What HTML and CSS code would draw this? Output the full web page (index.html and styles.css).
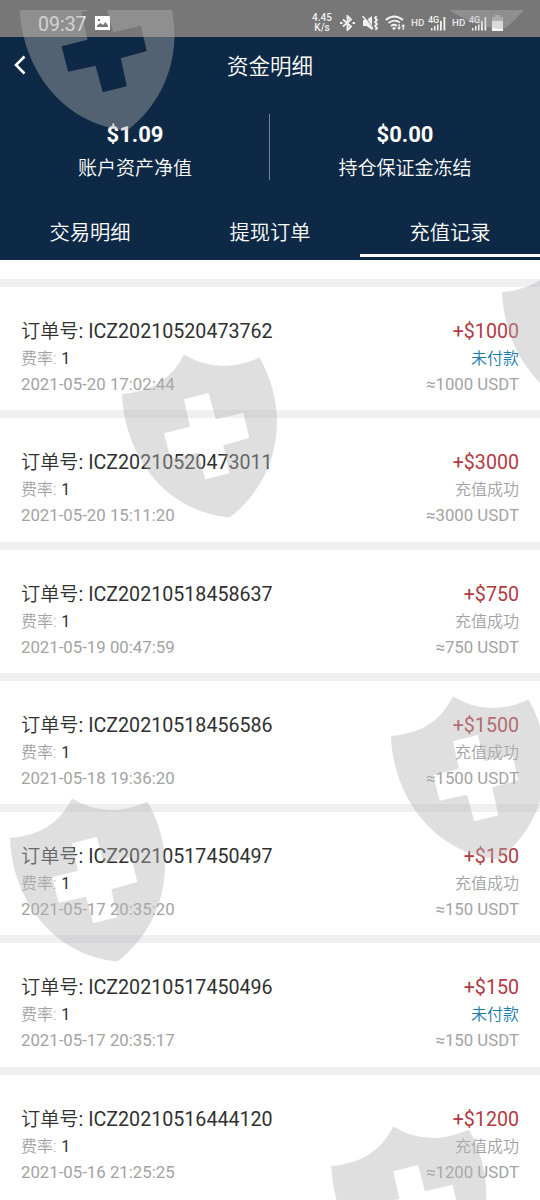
FILE: index.html
```html
<!doctype html>
<html lang="zh-CN">
<head>
  <meta charset="UTF-8">
  <meta name="viewport" content="width=device-width, initial-scale=1.0">
  <title>资金明细</title>
  <link rel="stylesheet" href="styles.css">
</head>
<body>
<div class="screen">
  <div class="status">
    <span class="status__time">09:37</span>
    <svg class="status__photo" width="16" height="14" viewBox="0 0 16 14">
      <path fill="#fff" fill-rule="evenodd" d="M0 0h15v14H0zM2 11h11V9.500L10.500 6 8 9 5.500 7 2 9.500zM3 3v2h2V3z"/>
    </svg>
    <div class="status__icons">
      <div class="speed">
        <span>4.45</span>
        <span>K/s</span>
      </div>
      <svg class="status__bt" width="15" height="16" viewBox="0 0 15 16">
        <path fill="none" stroke="#f2f2f2" stroke-width="1.800" d="M3 4.500l8 7L7.500 15V1L11 4.500l-8 7"/>
        <path fill="#f2f2f2" d="M0 7h2.500v2H0zM12.500 7H15v2h-2.500z"/>
      </svg>
      <svg class="status__mute" width="17" height="16" viewBox="0 0 17 16">
        <path fill="#f2f2f2" d="M1 5h3.500L10 1v14l-5.500-4H1z"/>
        <path stroke="#777" stroke-width="1" d="M2 0l9 13"/>
        <path stroke="#f2f2f2" stroke-width="1.500" d="M.5 1l10.500 13"/>
        <path fill="none" stroke="#f2f2f2" stroke-width="1.800" d="M14.500 1l-1.500 2 2 2-2 2 2 2-2 2 2 2-1.500 2"/>
      </svg>
      <svg class="status__wifi" width="21" height="16" viewBox="0 0 21 16">
        <path fill="none" stroke="#f2f2f2" stroke-width="1.700" d="M.8 5Q9 -2 18 5M3.500 8Q9 3.500 15 7.500M6 11q3-2.500 6 0"/>
        <circle cx="9" cy="13.300" r="1.500" fill="#f2f2f2"/>
        <path fill="#f2f2f2" d="M13.500 9h1.200v3.500H16L14 15l-2-2.500h1.500zM18.800 15h-1.200v-3.500h-1.300L18.300 9l2 2.500h-1.500z"/>
      </svg>
      <span class="hd">HD</span>
      <svg class="signal" width="19" height="16" viewBox="0 0 19 16">
        <text class="signal__label" x="0" y="7.500">4G</text>
        <path fill="#f2f2f2" d="M3 13h1.500v2.500H3zM6 11h1.500v4.500H6zM9 9.500h1.500v6H9zM12 6h1.800v9.500H12zM15.500 2h1.800v13.500h-1.800z"/>
      </svg>
      <span class="hd">HD</span>
      <svg class="signal" width="19" height="16" viewBox="0 0 19 16">
        <text class="signal__label" x="0" y="7.500">4G</text>
        <path fill="#f2f2f2" d="M3 13h1.500v2.500H3zM6 11h1.500v4.500H6zM9 9.500h1.500v6H9zM12 6h1.800v9.500H12zM15.500 2h1.800v13.500h-1.800z"/>
      </svg>
      <svg class="status__battery" width="11" height="16" viewBox="0 0 11 16">
        <path fill="#aaa" d="M3 0h5v2h3v4H0V2h3z"/>
        <path fill="#f8f8f8" d="M0 6h11v10H0z"/>
      </svg>
    </div>
  </div>

  <header class="header">
    <div class="nav">
      <svg class="nav__back" width="14" height="20" viewBox="0 0 14 20">
        <path fill="none" stroke="#fff" stroke-width="2.600" d="M12.500 1.500L4 10l8.500 8.500"/>
      </svg>
      <h1 class="nav__title">资金明细</h1>
    </div>
    <div class="summary">
      <div class="summary__item">
        <b class="summary__value">$1.09</b>
        <span class="summary__label">账户资产净值</span>
      </div>
      <div class="summary__item">
        <b class="summary__value">$0.00</b>
        <span class="summary__label">持仓保证金冻结</span>
      </div>
    </div>
    <nav class="tabs">
      <a class="tabs__item">交易明细</a>
      <a class="tabs__item">提现订单</a>
      <a class="tabs__item tabs__item--active">充值记录</a>
    </nav>
  </header>

  <main class="orders">
    <section class="order">
      <div class="order__row order__row--main"><span><span class="order__name">订单号</span>: ICZ20210520473762</span><span class="order__sum">+$1000</span></div>
      <div class="order__row order__row--rate"><span>费率: <i class="order__rate">1</i></span><span class="order__unpaid">未付款</span></div>
      <div class="order__row order__row--date"><span>2021-05-20 17:02:44</span><span>≈1000 USDT</span></div>
    </section>
    <section class="order">
      <div class="order__row order__row--main"><span><span class="order__name">订单号</span>: ICZ20210520473011</span><span class="order__sum">+$3000</span></div>
      <div class="order__row order__row--rate"><span>费率: <i class="order__rate">1</i></span><span>充值成功</span></div>
      <div class="order__row order__row--date"><span>2021-05-20 15:11:20</span><span>≈3000 USDT</span></div>
    </section>
    <section class="order">
      <div class="order__row order__row--main"><span><span class="order__name">订单号</span>: ICZ20210518458637</span><span class="order__sum">+$750</span></div>
      <div class="order__row order__row--rate"><span>费率: <i class="order__rate">1</i></span><span>充值成功</span></div>
      <div class="order__row order__row--date"><span>2021-05-19 00:47:59</span><span>≈750 USDT</span></div>
    </section>
    <section class="order">
      <div class="order__row order__row--main"><span><span class="order__name">订单号</span>: ICZ20210518456586</span><span class="order__sum">+$1500</span></div>
      <div class="order__row order__row--rate"><span>费率: <i class="order__rate">1</i></span><span>充值成功</span></div>
      <div class="order__row order__row--date"><span>2021-05-18 19:36:20</span><span>≈1500 USDT</span></div>
    </section>
    <section class="order">
      <div class="order__row order__row--main"><span><span class="order__name">订单号</span>: ICZ20210517450497</span><span class="order__sum">+$150</span></div>
      <div class="order__row order__row--rate"><span>费率: <i class="order__rate">1</i></span><span>充值成功</span></div>
      <div class="order__row order__row--date"><span>2021-05-17 20:35:20</span><span>≈150 USDT</span></div>
    </section>
    <section class="order">
      <div class="order__row order__row--main"><span><span class="order__name">订单号</span>: ICZ20210517450496</span><span class="order__sum">+$150</span></div>
      <div class="order__row order__row--rate"><span>费率: <i class="order__rate">1</i></span><span class="order__unpaid">未付款</span></div>
      <div class="order__row order__row--date"><span>2021-05-17 20:35:17</span><span>≈150 USDT</span></div>
    </section>
    <section class="order">
      <div class="order__row order__row--main"><span><span class="order__name">订单号</span>: ICZ20210516444120</span><span class="order__sum">+$1200</span></div>
      <div class="order__row order__row--rate"><span>费率: <i class="order__rate">1</i></span><span>充值成功</span></div>
      <div class="order__row order__row--date"><span>2021-05-16 21:25:25</span><span>≈1200 USDT</span></div>
    </section>
  </main>

  <!-- Watermark shields, lie over the whole page -->
  <svg class="watermark" width="540" height="1190" viewBox="0 10 540 1190">
    <defs>
      <path id="shield" fill-rule="evenodd" d="M0 40Q44 37 62 .5Q98 22 137.500 3.500C172 65 152 130 107.500 163.500C40 157 2 98 0 40z
        M62 45.300L86.700 39 93.700 65.300 121.300 58.700 127.300 84 101.300 91.300 107.300 119.300 83.300 125.300 76 98.700 48.700 104.700 42 79.300 68 72.700z"/>
    </defs>
    <use href="#shield" x="19.500" y="-33"/>
    <use href="#shield" x="396" y="-134"/>
    <use href="#shield" x="502" y="252"/>
    <use href="#shield" x="122" y="354"/>
    <use href="#shield" x="391" y="696"/>
    <use href="#shield" x="10" y="798"/>
    <use href="#shield" x="331.300" y="1126"/>
  </svg>
</div>
</body>
</html>
```

FILE: styles.css
```css
body {
  margin: 0;
  font-family: Roboto, "Noto Sans CJK SC", sans-serif;
  color: #303030;
  background-color: #fff;
}

.screen {
  position: relative;
  width: 540px;
  height: 1200px;
  overflow: hidden;
}

/* Status bar */

.status {
  display: flex;
  align-items: center;
  box-sizing: border-box;
  height: 37px;
  padding: 9px 37px 0 38px;
  background-color: #777;
  color: #e8e8e8;
}

.status__time {
  padding-top: 3px;
  font-size: 19.5px;
  line-height: 28px;
}

.status__photo {
  margin-left: 8px;
}

.status__icons {
  display: flex;
  align-items: center;
  margin-left: auto;
}

.speed {
  display: flex;
  flex-direction: column;
  width: 22px;
  margin-right: 7px;
  font-size: 10px;
  font-weight: 500;
  line-height: 10px;
  text-align: center;
  color: #f2f2f2;
}

.status__mute {
  margin-left: 7px;
}

.status__wifi {
  margin-left: 6px;
}

.hd {
  width: 14px;
  margin-left: 5px;
  font-size: 9.8px;
  font-weight: 500;
  line-height: 13px;
  padding-bottom: 1px;
}

.signal {
  margin-left: 3px;
}

.signal__label {
  font-size: 9px;
  font-weight: 500;
  fill: #f2f2f2;
}

.status__battery {
  margin-left: 4px;
}

/* Header */

.header {
  height: 223px;
  background-color: #0e2945;
  color: #fff;
}

.nav {
  display: flex;
  align-items: center;
  height: 56px;
}

.nav__back {
  margin-left: 12px;
}

.nav__title {
  flex: 1;
  margin: 0 26px 2px 0;
  font-size: 21.5px;
  font-weight: 350;
  text-align: center;
}

.summary {
  display: flex;
  height: 66px;
  padding-top: 21px;
}

.summary__item {
  display: flex;
  flex: 1;
  flex-direction: column;
  align-items: center;
}

.summary__item + .summary__item {
  box-shadow: -1px 0 0 #73859a;
}

.summary__value {
  padding-top: 6px;
  font-size: 22px;
  line-height: 30px;
}

.summary__label {
  font-size: 19px;
  font-weight: 350;
  line-height: 38px;
}

.tabs {
  display: flex;
  padding-top: 22px;
}

.tabs__item {
  flex: 1;
  box-sizing: border-box;
  height: 55px;
  border-bottom: 3px solid transparent;
  font-size: 20.3px;
  font-weight: 350;
  line-height: 62px;
  text-align: center;
}

.tabs__item--active {
  border-bottom-color: #fff;
}

/* Orders */

.orders {
  padding-top: 19px;
}

.order {
  box-sizing: border-box;
  height: 131.3px;
  padding: 9px 21px 0;
  border-top: 8.5px solid #f0f0f3;
}

.order__row {
  display: flex;
  justify-content: space-between;
  font-size: 16px;
  color: #a3a3a3;
}

.order__row--main {
  padding-top: 20px;
  font-size: 19.65px;
  line-height: 31px;
  color: #303030;
}

.order__name {
  font-size: 19.2px;
  font-weight: 350;
}

.order__row--rate {
  font-weight: 350;
  line-height: 23px;
}

.order__row--date {
  font-size: 16.8px;
  line-height: 28px;
}

.order__sum {
  color: #b23a42;
}

.order__rate {
  margin-left: 1px;
  font-style: normal;
  font-weight: 400;
  color: #303030;
}

.order__unpaid {
  color: #1d7ba8;
}

/* Watermark */

.watermark {
  position: absolute;
  top: 10px;
  left: 0;
  fill: rgba(178, 178, 178, .415);
  pointer-events: none;
}
```
